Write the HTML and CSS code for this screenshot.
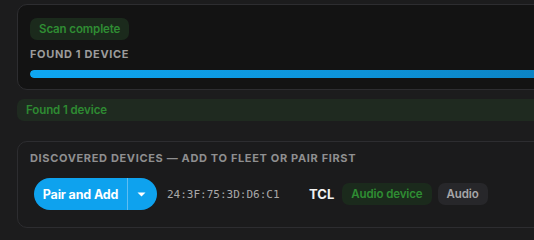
FILE: index.html
```html
<!DOCTYPE html>
<html>
<head>
<meta charset="utf-8">
<link rel="stylesheet" href="styles.css">
</head>
<body>
<div class="page">
  <section class="card scan-card">
    <span class="pill pill-green">Scan complete</span>
    <div class="label">FOUND 1 DEVICE</div>
    <div class="progress"><div class="progress-fill"></div></div>
  </section>
  <div class="notice">Found 1 device</div>
  <section class="card list-card">
    <div class="label label-header">DISCOVERED DEVICES — ADD TO FLEET OR PAIR FIRST</div>
    <div class="device-row">
      <div class="split-btn">
        <button class="btn-main">Pair and Add</button>
        <button class="btn-arrow" aria-label="More">
          <svg width="9" height="5" viewBox="0 0 9 5"><path d="M0.5 0.5 L8.5 0.5 L4.5 4.5 Z" fill="#ffffff"/></svg>
        </button>
      </div>
      <span class="mac">24:3F:75:3D:D6:C1</span>
      <span class="brand">TCL</span>
      <span class="pill pill-green">Audio device</span>
      <span class="pill pill-gray">Audio</span>
    </div>
  </section>
</div>
</body>
</html>
```
FILE: styles.css
```css
html, body {
  margin: 0;
  padding: 0;
  overflow: hidden;
  background: #1c1c1d;
}
body {
  font-family: Inter, "Noto Sans", sans-serif;
  color: #e8e8e8;
}
.page {
  width: 580px;
  padding: 4px 0 0 17px;
}
.card {
  border: 1px solid #2d2d30;
  border-radius: 10px;
}
.scan-card {
  background: #131313;
  padding: 12px 12px 11px;
}
.pill {
  display: inline-flex;
  align-items: center;
  height: 22px;
  padding: 0 9px;
  border-radius: 7px;
  font-size: 11.5px;
  letter-spacing: -0.1px;
  font-weight: 600;
  box-sizing: border-box;
}
.pill-green {
  background: #1b2a1c;
  color: #2f8d33;
}
.pill-gray {
  background: #27272a;
  color: #a6a6a8;
}
.label {
  margin-top: 7px;
  font-size: 11px;
  line-height: 14px;
  font-weight: 700;
  letter-spacing: 0.65px;
  color: #9c9c9c;
}
.progress {
  margin-top: 9px;
  height: 8px;
  border-radius: 4px;
  overflow: hidden;
}
.progress-fill {
  height: 100%;
  border-radius: 4px;
  background: linear-gradient(90deg, #0ea6f2 0%, #0d92d8 60%, #0b7fbf 100%);
}
.notice {
  margin-top: 9px;
  height: 22px;
  line-height: 22px;
  border-radius: 7px;
  background: #1f2a20;
  color: #2e8a32;
  font-size: 11.5px;
  letter-spacing: -0.1px;
  font-weight: 600;
  padding-left: 9px;
}
.list-card {
  margin-top: 20px;
  background: #1b1b1c;
  padding: 9px 12px 17px;
}
.label-header {
  margin-top: 0;
  color: #8f8f90;
}
.device-row {
  margin-top: 13px;
  padding-left: 4px;
  display: flex;
  align-items: center;
}
.split-btn {
  display: flex;
  height: 32px;
  border-radius: 16px;
  background: #0ea2ee;
  overflow: hidden;
}
.split-btn button {
  border: 0;
  background: transparent;
  color: #ffffff;
  font-family: inherit;
  cursor: pointer;
  padding: 0;
}
.btn-main {
  width: 94px;
  font-size: 12.5px;
  letter-spacing: -0.15px;
  font-weight: 700;
  border-right: 1px solid #5fbdf2 !important;
}
.btn-arrow {
  width: 29px;
  display: flex;
  align-items: center;
  justify-content: center;
  padding-right: 2px !important;
}
.mac {
  margin-left: 10px;
  width: 142px;
  font-family: "DejaVu Sans Mono", "Liberation Mono", monospace;
  font-size: 11px;
  color: #a9a9a9;
}
.brand {
  font-size: 13px;
  font-weight: 700;
  color: #f2f2f2;
  margin-right: 8px;
}
.pill-gray {
  margin-left: 6px;
}
.device-row .pill {
  padding: 0 9px;
}
```
